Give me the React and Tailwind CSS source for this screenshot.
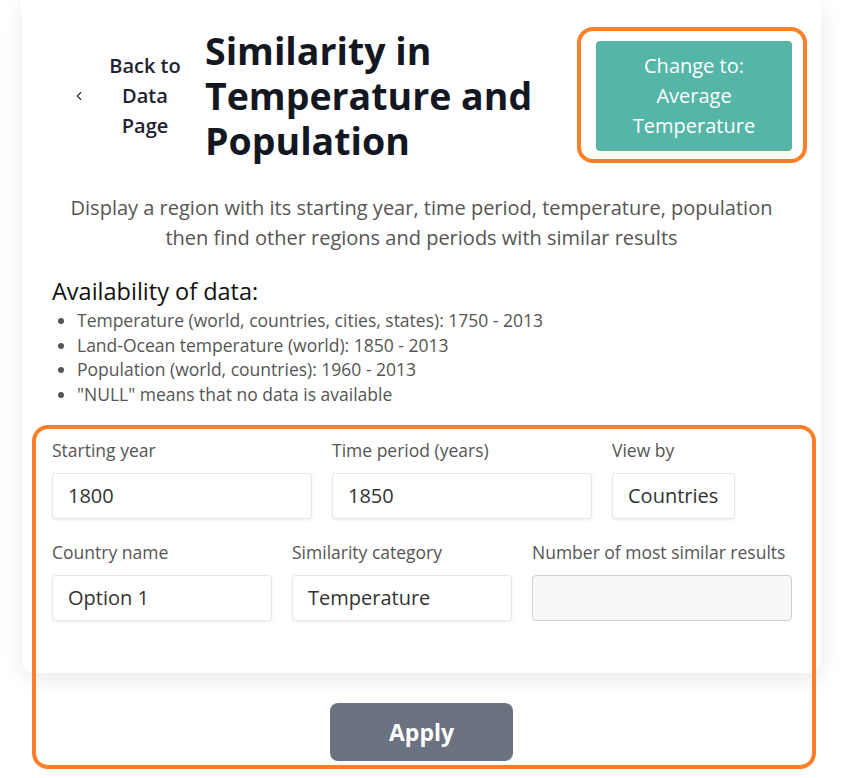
import React from 'react';
import { ChevronLeft } from 'lucide-react';

const Field = ({ label, value, width, disabled }) => (
    <div className="flex flex-col">
        <label className="text-[17.5px] leading-[24px] text-[#555] mb-[11px]">{label}</label>
        <div
            className={`h-[46px] rounded-[4px] border flex items-center px-[15px] text-[20px] text-[#333] ${disabled
                ? 'bg-[#f8f8f8] border-[#cfcfcf]'
                : 'bg-white border-[#e6e6e6] shadow-[0_1px_3px_rgba(0,0,0,0.08)]'
                }`}
            style={{ width }}
        >
            {value}
        </div>
    </div>
);

const App = () => {
    const availability = [
        'Temperature (world, countries, cities, states): 1750 - 2013',
        'Land-Ocean temperature (world): 1850 - 2013',
        'Population (world, countries): 1960 - 2013',
        '"NULL" means that no data is available',
    ];

    return (
        <div className="relative min-h-[778px] bg-white overflow-hidden font-['Open_Sans',sans-serif]">
            <div className="ml-[22px] w-[799px] bg-white rounded-b-[12px] shadow-[0_6px_22px_rgba(0,0,0,0.09)] pb-[52px]">
                {/* header */}
                <div className="flex items-center pt-[28px] pl-[50px] pr-[29px]">
                    <ChevronLeft size={14} strokeWidth={2} className="text-[#333] mr-[17px]" />
                    <div className="w-[84px] text-center text-[20px] leading-[30px] font-semibold text-[#1f2230]">
                        Back to<br />Data<br />Page
                    </div>
                    <h1 className="ml-[18px] w-[360px] text-[37.5px] leading-[45px] font-bold text-[#131722]">
                        Similarity in Temperature and Population
                    </h1>
                    <div className="flex-1" />
                    <button className="w-[196px] h-[110px] rounded-[4px] bg-[#55b5a6] text-white text-[20px] leading-[30px]">
                        Change to:<br />Average<br />Temperature
                    </button>
                </div>

                <p className="mt-[30px] text-center text-[20px] leading-[30px] text-[#555]">
                    Display a region with its starting year, time period, temperature, population<br />
                    then find other regions and periods with similar results
                </p>

                <div className="px-[30px] mt-[23px]">
                    <h2 className="text-[23.5px] leading-[30px] font-medium text-[#111]">Availability of data:</h2>
                    <ul className="list-disc pl-[25px] text-[17.5px] leading-[24.7px] text-[#555] mt-[2px]">
                        {availability.map(item => (
                            <li key={item}>{item}</li>
                        ))}
                    </ul>
                </div>

                <div className="px-[30px] mt-[31px] flex flex-col gap-[21px]">
                    <div className="flex gap-[20px]">
                        <Field label="Starting year" value="1800" width={260} />
                        <Field label="Time period (years)" value="1850" width={260} />
                        <Field label="View by" value="Countries" width={123} />
                    </div>
                    <div className="flex gap-[20px]">
                        <Field label="Country name" value="Option 1" width={220} />
                        <Field label="Similarity category" value="Temperature" width={220} />
                        <Field label="Number of most similar results" value="" width={260} disabled />
                    </div>
                </div>
            </div>

            <div className="w-[843px] flex justify-center mt-[30px]">
                <button className="w-[183px] h-[58px] rounded-[8px] bg-[#6b7280] text-white text-[23px] font-bold">
                    Apply
                </button>
            </div>

            {/* highlight annotations */}
            <div className="absolute left-[577px] top-[27px] w-[230px] h-[136px] border-[4px] border-[#fd7f28] rounded-[16px] pointer-events-none" />
            <div className="absolute left-[32px] top-[425px] w-[784px] h-[344px] border-[4px] border-[#fd7f28] rounded-[16px] pointer-events-none" />
        </div>
    );
};

export default App;
